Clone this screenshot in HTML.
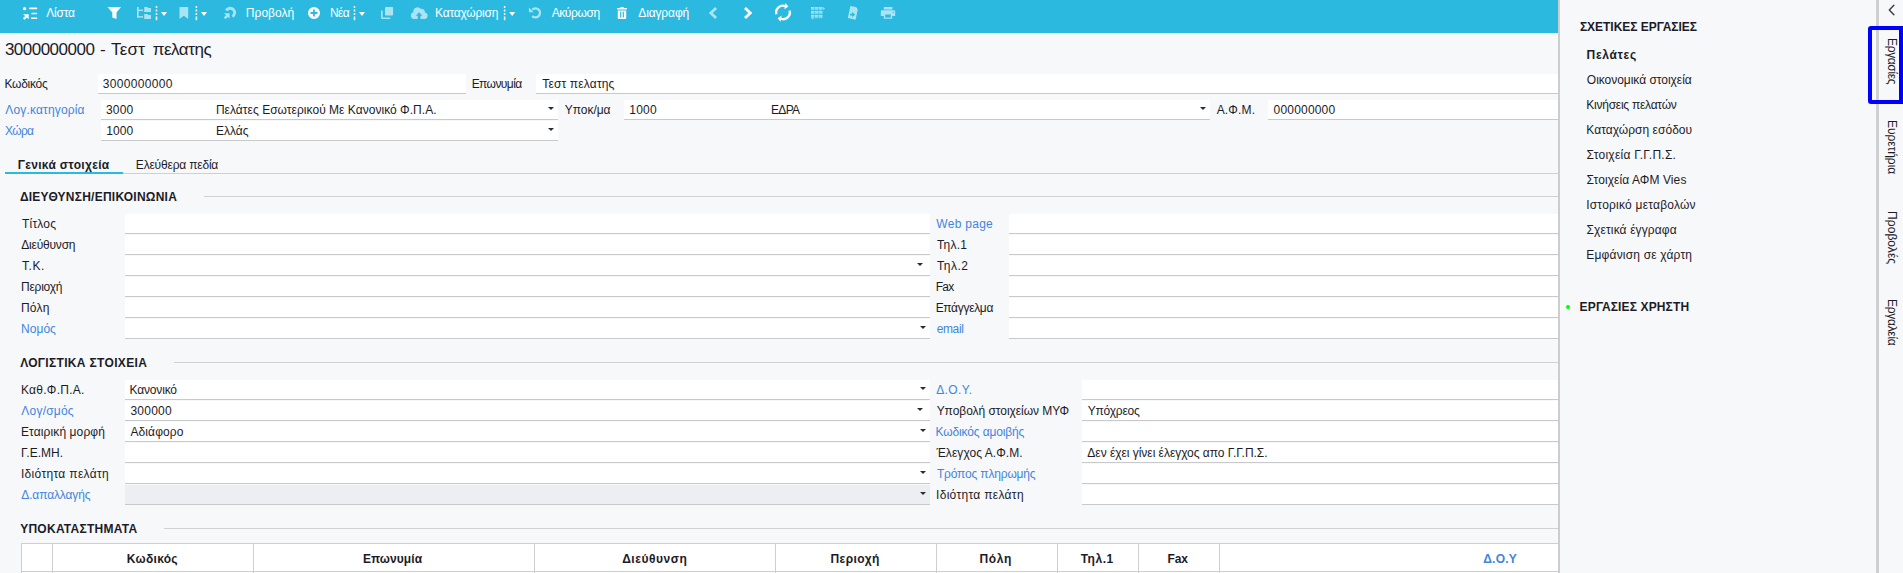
<!DOCTYPE html>
<html lang="el"><head><meta charset="utf-8"><title>3000000000 - Τεστ πελατης</title>
<style>
html,body{margin:0;padding:0}
body{width:1903px;height:573px;overflow:hidden;background:#f7f8fa;font-family:"Liberation Sans",sans-serif;font-size:12px;color:#1c1c28;position:relative}
.t{position:absolute;white-space:nowrap;line-height:14px;height:14px}
.f{position:absolute;height:19px;background:#fff;border-bottom:1px solid #c8c9cb}
.f.d{background:#edeef2}
.b{font-weight:bold}
.l{color:#4285dd}
.w{color:#fff}
.hr{position:absolute;height:1px;background:#d0d1d3}
.ar{position:absolute;width:0;height:0;border-left:3px solid transparent;border-right:3px solid transparent;border-top:3px solid #2a2d35}
#tb{position:absolute;left:0;top:0;width:1558px;height:33px;background:#2bb9df}
#vl{position:absolute;left:1558px;top:0;width:2px;height:573px;background:#cdcdcf}
#vl2{position:absolute;left:1876px;top:0;width:3px;height:573px;background:#cfcfd1}
.vt{position:absolute;left:1885px;writing-mode:vertical-rl;line-height:14px;width:14px;white-space:nowrap}
#sel{position:absolute;left:1868px;top:26px;width:27px;height:70px;border:4px solid #0000ff;border-radius:3px 0 0 3px}
#tbl{position:absolute;left:21px;top:543px;height:30px;width:1537px;overflow:hidden}
.th{position:absolute;top:0;height:40px;background:#fff;border:1px solid #cdcfd1;border-right:none;box-sizing:border-box}
</style></head><body>

<div id="tb">
<svg id="ic" width="1558" height="33" viewBox="0 0 1558 33" style="position:absolute;left:0;top:0">
<defs><linearGradient id="gg" x1="0" y1="0" x2="0" y2="1"><stop offset="0" stop-color="#fff" stop-opacity="1"/><stop offset="1" stop-color="#fff" stop-opacity=".55"/></linearGradient></defs>
<g fill="#fff">
<circle cx="24.6" cy="8.7" r="1.65"/>
<rect x="29.2" y="7.6" width="8" height="1.6" rx=".5"/>
<rect x="31.4" y="12.7" width="5.8" height="1.6" rx=".5"/>
<rect x="31" y="17.4" width="6.2" height="1.6" rx=".5"/>
<path d="M23 14.3H28.7V19.2L26.9 17.6L24.5 19.8L22.9 18.2L25.2 16Z"/>
<path d="M107.4 7.1H121L116.5 12.6V19L112.3 17.4V12.6Z"/>
<path d="M161 12.1h6l-3 3.8z"/><path d="M201 12.1h6l-3 3.8z"/><path d="M359 12.1h6l-3 3.8z"/><path d="M509.2 12.1h6l-3 3.8z"/>
<path fill-rule="evenodd" d="M314 7a6 6 0 1 0 0 12a6 6 0 1 0 0-12zM313.1 9.5h1.8v2.6h2.6v1.8h-2.6v2.6h-1.8v-2.6h-2.6v-1.8h2.6z"/>
<path d="M620.3 7h3.4v1h3.3v1.6h-10V8h3.3zM617.8 10.4h8.4V18.2a.8.8 0 0 1-.8.8h-6.8a.8.8 0 0 1-.8-.8zM620.1 11.8v5.6h1.2v-5.6zM622.7 11.8v5.6h1.2v-5.6z" fill-rule="evenodd"/>
</g>
<g fill="#fff"><rect x="155.75" y="6" width="1.5" height="2"/><rect x="155.75" y="9.5" width="1.5" height="2"/><rect x="155.75" y="13" width="1.5" height="2"/><rect x="155.75" y="16.5" width="1.5" height="3.7"/><rect x="195.65" y="6" width="1.5" height="2"/><rect x="195.65" y="9.5" width="1.5" height="2"/><rect x="195.65" y="13" width="1.5" height="2"/><rect x="195.65" y="16.5" width="1.5" height="3.7"/><rect x="353.75" y="6" width="1.5" height="2"/><rect x="353.75" y="9.5" width="1.5" height="2"/><rect x="353.75" y="13" width="1.5" height="2"/><rect x="353.75" y="16.5" width="1.5" height="3.7"/><rect x="503.85" y="6" width="1.5" height="2"/><rect x="503.85" y="9.5" width="1.5" height="2"/><rect x="503.85" y="13" width="1.5" height="2"/><rect x="503.85" y="16.5" width="1.5" height="3.7"/></g>
<path d="M745 7.9L750.3 13L745 18.1" fill="none" stroke="#fff" stroke-width="2.8"/>
<g fill="none" stroke="#fff" stroke-width="2.4">
<path d="M776.4 14.2A6.7 6.7 0 0 1 785.6 6.3"/>
<path d="M789.6 10.6A6.7 6.7 0 0 1 780.4 18.5"/>
</g>
<path d="M785.4 3.1L788.4 6.5L784.4 9.3Z" fill="#fff"/>
<path d="M780.6 21.7L777.6 18.3L781.6 15.5Z" fill="#fff"/>
<g opacity=".6">
<g fill="#fff">
<rect x="137" y="7" width="1.6" height="10.6"/><rect x="137" y="9.6" width="6" height="1.5"/><rect x="137" y="16.1" width="6" height="1.5"/>
<path d="M144.2 7h3.2l.8 1h2.8v4h-6.8z"/><path d="M144.2 14h3.2l.8 1h2.8v4h-6.8z"/>
<path d="M179.5 7h8.7v12l-4.35-3.2L179.5 19z"/>
<path d="M223.9 13.2H229.6V18.6L227.8 16.9L225.5 19.2L223.8 17.5L226.1 15.2Z"/>
<rect x="385" y="7" width="8.1" height="8.4" rx="1"/>
<path d="M381 10.4h1.6v7h7.6v1.6h-8.2a1 1 0 0 1-1-1z"/>
<path fill-rule="evenodd" d="M414.3 19a3.4 3.4 0 0 1-.9-6.7a4.2 4.2 0 0 1 7.3-3.6a3.6 3.6 0 0 1 4.2 3.9a3.2 3.2 0 0 1-1 6.4h-3.4v-3.2h1.9l-3.3-3.6l-3.3 3.6h1.9v3.2z"/>
<path d="M528.9 7.6V12.2H533.7Z"/>
<rect x="811" y="7" width="3.5" height="3.3" fill="url(#gg)"/><rect x="815" y="7" width="3.5" height="3.3" fill="url(#gg)"/><rect x="819" y="7" width="3.5" height="3.3" fill="url(#gg)"/><rect x="811" y="11" width="3.5" height="3.3" fill="url(#gg)"/><rect x="815" y="11" width="3.5" height="3.3" fill="url(#gg)"/><rect x="819" y="11" width="3.5" height="3.3" fill="url(#gg)"/><rect x="811" y="15" width="3.5" height="3.3" fill="url(#gg)"/><rect x="815" y="15" width="3.5" height="3.3" fill="url(#gg)"/><rect x="819" y="15" width="3.5" height="3.3" fill="url(#gg)"/>
<path d="M823.2 7l1.8 1.5l-1.8 1.5z"/><path d="M811.4 18.2h2.4l-1.2 1.4z"/>
<path fill-rule="evenodd" d="M883.8 7h8.6v1.9h-8.6zM882 10.2h12a1.2 1.2 0 0 1 1.2 1.2v4.7h-3v2.7h-8.4v-2.7h-3v-4.7a1.2 1.2 0 0 1 1.2-1.2zM893.3 11.7a.6.6 0 1 0 .01 0zM885.2 14.5h5.6v3h-5.6z"/>
<rect x="883.8" y="8.9" width="8.6" height="1.3" opacity=".55"/>
</g>
<path d="M226.3 10.5A4.45 4.45 0 1 1 232.3 16.6" fill="none" stroke="#fff" stroke-width="2.9"/>
<path d="M532.2 9.7A4.55 4.55 0 1 1 532.2 16.1" fill="none" stroke="#fff" stroke-width="2.3"/>
<path d="M716.1 7.9L710.8 13L716.1 18.1" fill="none" stroke="#fff" stroke-width="2.8"/>
</g>
<g transform="rotate(12 853 12.8)">
<path d="M849 6.6h5.6l2.4 2.6v9.8h-8z" fill="#fff" opacity=".6"/>
<path d="M854.9 6.3l2.4 2.6h-2.4z" fill="#fff" opacity=".35"/>
</g>
<path d="M850 13.7h2.2v-1.7l2.9 2.6l-2.9 2.6v-1.7h-2.2z" fill="#2bb9df"/>
</svg>

</div>
<div class="t w" style="left:46.3px;top:6px;letter-spacing:-0.21px">Λίστα</div>
<div class="t w" style="left:245.83px;top:6px;letter-spacing:0.04px">Προβολή</div>
<div class="t w" style="left:330.03px;top:6px;letter-spacing:-0.7px">Νέα</div>
<div class="t w" style="left:435px;top:6px;letter-spacing:-0.2px">Καταχώριση</div>
<div class="t w" style="left:551.63px;top:6px;letter-spacing:-0.39px">Ακύρωση</div>
<div class="t w" style="left:638.24px;top:6px;letter-spacing:-0.12px">Διαγραφή</div>
<div class="t" style="left:4.9px;top:40px;letter-spacing:-0.51px;font-size:17px;line-height:20px;height:20px">3000000000</div>
<div class="t" style="left:100.1px;top:40px;font-size:17px;line-height:20px;height:20px">-</div>
<div class="t" style="left:111.03px;top:40px;letter-spacing:0.19px;font-size:17px;line-height:20px;height:20px">Τεστ</div>
<div class="t" style="left:152.73px;top:40px;letter-spacing:-0.47px;font-size:17px;line-height:20px;height:20px">πελατης</div>
<div class="t" style="left:4.5px;top:77px;letter-spacing:-0.27px">Κωδικός</div>
<div class="f " style="left:98px;top:74px;width:368px"></div>
<div class="t" style="left:102.86px;top:77px;letter-spacing:0.32px">3000000000</div>
<div class="t" style="left:471.63px;top:77px;letter-spacing:-0.57px">Επωνυμία</div>
<div class="f " style="left:536px;top:74px;width:1022px"></div>
<div class="t" style="left:542.22px;top:77px;letter-spacing:0.16px">Τεστ πελατης</div>
<div class="t l" style="left:5.3px;top:103px;letter-spacing:0.16px">Λογ.κατηγορία</div>
<div class="f " style="left:101px;top:100px;width:457px"></div>
<div class="t" style="left:106.06px;top:103px;letter-spacing:0.13px">3000</div>
<div class="t" style="left:215.93px;top:103px;letter-spacing:0.03px">Πελάτες Εσωτερικού Με Κανονικό Φ.Π.Α.</div>
<div class="ar" style="left:548px;top:107px"></div>
<div class="t" style="left:564.85px;top:103px;letter-spacing:-0.05px">Υποκ/μα</div>
<div class="f " style="left:624px;top:100px;width:586px"></div>
<div class="t" style="left:629.36px;top:103px;letter-spacing:0.17px">1000</div>
<div class="t" style="left:771.03px;top:103px;letter-spacing:-0.7px">ΕΔΡΑ</div>
<div class="ar" style="left:1200px;top:107px"></div>
<div class="t" style="left:1216.73px;top:103px;letter-spacing:0.14px">Α.Φ.Μ.</div>
<div class="f " style="left:1268px;top:100px;width:290px"></div>
<div class="t" style="left:1273.62px;top:103px;letter-spacing:0.18px">000000000</div>
<div class="t l" style="left:5.03px;top:124px;letter-spacing:-0.7px">Χώρα</div>
<div class="f " style="left:101px;top:121px;width:457px"></div>
<div class="t" style="left:106.36px;top:124px;letter-spacing:0.03px">1000</div>
<div class="t" style="left:215.93px;top:124px">Ελλάς</div>
<div class="ar" style="left:548px;top:128px"></div>
<div class="t b" style="left:17.7px;top:158px;letter-spacing:0.31px">Γενικά στοιχεία</div>
<div class="t" style="left:135.83px;top:158px;letter-spacing:-0.19px">Ελεύθερα πεδία</div>
<div class="hr" style="left:5px;top:173px;width:1553px;background:#cfd0d2"></div>
<div style="position:absolute;left:5px;top:172px;width:118px;height:2px;background:#2bb9df"></div>
<div class="t b" style="left:19.92px;top:190px;letter-spacing:0.24px">ΔΙΕΥΘΥΝΣΗ/ΕΠΙΚΟΙΝΩΝΙΑ</div>
<div class="hr" style="left:204px;top:196px;width:1354px"></div>
<div class="t" style="left:22.02px;top:217px;letter-spacing:0.2px">Τίτλος</div>
<div class="f " style="left:125px;top:214px;width:805px"></div>
<div class="t l" style="left:936.27px;top:217px;letter-spacing:0.29px">Web page</div>
<div class="f " style="left:1009px;top:214px;width:549px"></div>
<div class="t" style="left:21.24px;top:238px;letter-spacing:-0.2px">Διεύθυνση</div>
<div class="f " style="left:125px;top:235px;width:805px"></div>
<div class="t" style="left:936.92px;top:238px;letter-spacing:0.22px">Τηλ.1</div>
<div class="f " style="left:1009px;top:235px;width:549px"></div>
<div class="t" style="left:22.02px;top:259px;letter-spacing:0.53px">Τ.Κ.</div>
<div class="f " style="left:125px;top:256px;width:805px"></div>
<div class="t" style="left:936.92px;top:259px;letter-spacing:0.47px">Τηλ.2</div>
<div class="f " style="left:1009px;top:256px;width:549px"></div>
<div class="t" style="left:21.03px;top:280px;letter-spacing:-0.23px">Περιοχή</div>
<div class="f " style="left:125px;top:277px;width:805px"></div>
<div class="t" style="left:935.63px;top:280px;letter-spacing:-0.7px">Fax</div>
<div class="f " style="left:1009px;top:277px;width:549px"></div>
<div class="t" style="left:21.03px;top:301px;letter-spacing:0.18px">Πόλη</div>
<div class="f " style="left:125px;top:298px;width:805px"></div>
<div class="t" style="left:935.63px;top:301px;letter-spacing:-0.31px">Επάγγελμα</div>
<div class="f " style="left:1009px;top:298px;width:549px"></div>
<div class="t l" style="left:21.03px;top:322px;letter-spacing:0.04px">Νομός</div>
<div class="f " style="left:125px;top:319px;width:805px"></div>
<div class="t l" style="left:936.67px;top:322px;letter-spacing:-0.37px">email</div>
<div class="f " style="left:1009px;top:319px;width:549px"></div>
<div class="ar" style="left:917px;top:263px"></div>
<div class="ar" style="left:920px;top:326px"></div>
<div class="t b" style="left:20.13px;top:356px;letter-spacing:0.33px">ΛΟΓΙΣΤΙΚΑ ΣΤΟΙΧΕΙΑ</div>
<div class="hr" style="left:174px;top:362px;width:1384px"></div>
<div class="t" style="left:21px;top:383px;letter-spacing:0.26px">Καθ.Φ.Π.Α.</div>
<div class="f " style="left:125px;top:380px;width:805px"></div>
<div class="t" style="left:129.6px;top:383px;letter-spacing:-0.18px">Κανονικό</div>
<div class="t l" style="left:936.14px;top:383px;letter-spacing:0.41px">Δ.Ο.Υ.</div>
<div class="f " style="left:1082px;top:380px;width:476px"></div>
<div class="t l" style="left:21.3px;top:404px;letter-spacing:0.22px">Λογ/σμός</div>
<div class="f " style="left:125px;top:401px;width:805px"></div>
<div class="t" style="left:130.46px;top:404px;letter-spacing:0.22px">300000</div>
<div class="t" style="left:936.65px;top:404px;letter-spacing:-0.05px">Υποβολή στοιχείων ΜΥΦ</div>
<div class="f " style="left:1082px;top:401px;width:476px"></div>
<div class="t" style="left:1087.75px;top:404px;letter-spacing:-0.22px">Υπόχρεος</div>
<div class="t" style="left:21.03px;top:425px;letter-spacing:0.1px">Εταιρική μορφή</div>
<div class="f " style="left:125px;top:422px;width:805px"></div>
<div class="t" style="left:130.43px;top:425px;letter-spacing:0.11px">Αδιάφορο</div>
<div class="t l" style="left:935.6px;top:425px;letter-spacing:-0.14px">Κωδικός αμοιβής</div>
<div class="f " style="left:1082px;top:422px;width:476px"></div>
<div class="t" style="left:21.03px;top:446px;letter-spacing:0.02px">Γ.Ε.ΜΗ.</div>
<div class="f " style="left:125px;top:443px;width:805px"></div>
<div class="t" style="left:936.4px;top:446px;letter-spacing:0.06px">Έλεγχος Α.Φ.Μ.</div>
<div class="f " style="left:1082px;top:443px;width:476px"></div>
<div class="t" style="left:1087.34px;top:446px;letter-spacing:-0.03px">Δεν έχει γίνει έλεγχος απο Γ.Γ.Π.Σ.</div>
<div class="t" style="left:20.9px;top:467px;letter-spacing:0.33px">Ιδιότητα πελάτη</div>
<div class="f " style="left:125px;top:464px;width:805px"></div>
<div class="t l" style="left:936.92px;top:467px;letter-spacing:-0.17px">Τρόπος πληρωμής</div>
<div class="f " style="left:1082px;top:464px;width:476px"></div>
<div class="t l" style="left:21.24px;top:488px;letter-spacing:-0.12px">Δ.απαλλαγής</div>
<div class="f d" style="left:125px;top:485px;width:805px"></div>
<div class="t" style="left:936px;top:488px;letter-spacing:0.31px">Ιδιότητα πελάτη</div>
<div class="f " style="left:1082px;top:485px;width:476px"></div>
<div class="ar" style="left:920px;top:387px"></div>
<div class="ar" style="left:916.5px;top:408px"></div>
<div class="ar" style="left:920px;top:429px"></div>
<div class="ar" style="left:920px;top:471px"></div>
<div class="ar" style="left:920px;top:492px"></div>
<div class="t b" style="left:20.15px;top:522px;letter-spacing:0.27px">ΥΠΟΚΑΤΑΣΤΗΜΑΤΑ</div>
<div class="hr" style="left:164px;top:528px;width:1394px"></div>
<div id="tbl">
<div class="th" style="left:0px;width:31px"></div>
<div class="th" style="left:31px;width:201px"></div>
<div class="th" style="left:232px;width:281px"></div>
<div class="th" style="left:513px;width:241px"></div>
<div class="th" style="left:754px;width:161px"></div>
<div class="th" style="left:915px;width:121px"></div>
<div class="th" style="left:1036px;width:81px"></div>
<div class="th" style="left:1117px;width:81px"></div>
<div class="th" style="left:1198px;width:561px"></div>
<div style="position:absolute;left:0;top:28px;width:1537px;height:1px;background:#cdcfd1"></div>
</div>
<div class="t b" style="left:126.8px;top:552px;letter-spacing:0.3px">Κωδικός</div>
<div class="t b" style="left:362.9px;top:552px;letter-spacing:0.06px">Επωνυμία</div>
<div class="t b" style="left:622.22px;top:552px;letter-spacing:0.53px">Διεύθυνση</div>
<div class="t b" style="left:830.4px;top:552px;letter-spacing:0.46px">Περιοχή</div>
<div class="t b" style="left:979.5px;top:552px;letter-spacing:0.63px">Πόλη</div>
<div class="t b" style="left:1080.63px;top:552px;letter-spacing:0.54px">Τηλ.1</div>
<div class="t b" style="left:1167.4px;top:552px;letter-spacing:-0.02px">Fax</div>
<div class="t b l" style="left:1483.22px;top:552px;letter-spacing:0.24px">Δ.Ο.Υ</div>
<div id="vl"></div>
<div class="t b" style="left:1579.88px;top:20px;letter-spacing:-0.02px">ΣΧΕΤΙΚΕΣ ΕΡΓΑΣΙΕΣ</div>
<div class="t b" style="left:1586.6px;top:48px;letter-spacing:0.67px">Πελάτες</div>
<div class="t" style="left:1586.84px;top:73px;letter-spacing:-0.03px">Οικονομικά στοιχεία</div>
<div class="t" style="left:1586.3px;top:98px;letter-spacing:-0.25px">Κινήσεις πελατών</div>
<div class="t" style="left:1586.3px;top:123px;letter-spacing:0.04px">Καταχώρση εσόδου</div>
<div class="t" style="left:1586.59px;top:148px;letter-spacing:0.25px">Στοιχεία Γ.Γ.Π.Σ.</div>
<div class="t" style="left:1586.59px;top:173px;letter-spacing:0.09px">Στοιχεία ΑΦΜ Vies</div>
<div class="t" style="left:1586.2px;top:198px;letter-spacing:0.22px">Ιστορικό μεταβολών</div>
<div class="t" style="left:1586.59px;top:223px;letter-spacing:0.12px">Σχετικά έγγραφα</div>
<div class="t" style="left:1586.33px;top:248px;letter-spacing:0.18px">Εμφάνιση σε χάρτη</div>
<div style="position:absolute;left:1566px;top:305px;width:4px;height:4px;border-radius:2px;background:#00ff00"></div>
<div class="t b" style="left:1579.6px;top:300px;letter-spacing:0.14px">ΕΡΓΑΣΙΕΣ ΧΡΗΣΤΗ</div>
<div id="vl2"></div>
<div id="sel"></div>
<svg style="position:absolute;left:1885px;top:3px" width="14" height="14" viewBox="0 0 14 14"><path d="M8.9 2.2 L4.3 6.9 L8.9 11.7" fill="none" stroke="#3c3c46" stroke-width="1.4" stroke-linecap="round" stroke-linejoin="round"/></svg>
<div class="t" style="left:1899px;top:37.83px;transform:rotate(90deg);transform-origin:0 0;letter-spacing:-0.35px">Εργασίες</div>
<div class="t" style="left:1899px;top:119.83px;transform:rotate(90deg);transform-origin:0 0;letter-spacing:-0.05px">Ευρετήρια</div>
<div class="t" style="left:1899px;top:210.53px;transform:rotate(90deg);transform-origin:0 0;letter-spacing:0.07px">Προβολές</div>
<div class="t" style="left:1899px;top:298.53px;transform:rotate(90deg);transform-origin:0 0;letter-spacing:-0.28px">Εργαλεία</div>
</body></html>
